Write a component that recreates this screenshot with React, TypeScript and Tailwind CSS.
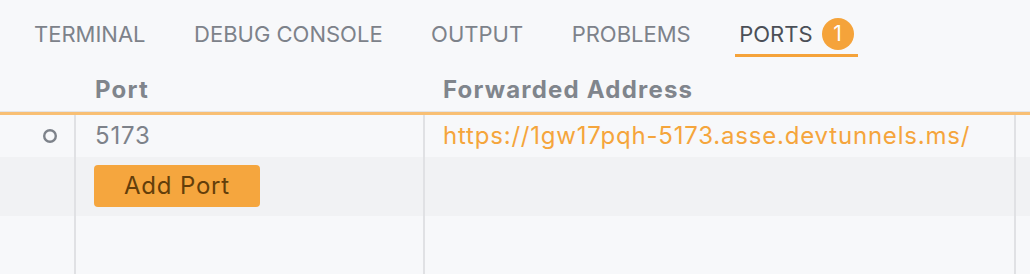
import React from 'react';

const tabs = ['TERMINAL', 'DEBUG CONSOLE', 'OUTPUT', 'PROBLEMS'];

function Circle() {
  return (
    <svg width="16" height="16" viewBox="0 0 16 16" fill="none">
      <circle cx="8" cy="8" r="5.8" stroke="#7d828a" strokeWidth="2.4" />
    </svg>
  );
}

export default function App() {
  return (
    <div
      className="h-[274px] w-[1030px] overflow-hidden bg-[#f7f8fa] flex flex-col"
      style={{ fontFamily: 'Inter, "Noto Sans", sans-serif' }}
    >
      {/* Tabs */}
      <div className="h-[57px] flex items-stretch gap-[40.5px] pl-[30px] text-[22px] leading-[22px]">
        {tabs.map((t) => (
          <div
            key={t}
            className="px-1 pt-[14px] flex items-center text-[#7d828a] border-b-[3px] border-transparent"
          >
            {t}
          </div>
        ))}
        <div className="px-1 pt-[14px] flex items-center text-[#4b4f57] border-b-[3px] border-[#f5a33a]">
          PORTS
          <span className="ml-[9px] w-[32px] h-[32px] rounded-full bg-[#f5a33a] text-white flex items-center justify-center text-[21px]">
            1
          </span>
        </div>
      </div>

      {/* Header */}
      <div className="h-[55px] flex items-start pt-[21px] text-[24px] leading-[24px] tracking-[1.2px] font-bold text-[#80858c] border-b border-[#e3e4e7]">
        <div className="w-[95px]" />
        <div className="w-[348px]">Port</div>
        <div>Forwarded Address</div>
      </div>
      <div className="h-[3px] bg-[#f8bf74]" />

      {/* Rows */}
      <div className="h-[42px] flex text-[24px] leading-[24px] tracking-[0.8px]">
        <div className="w-[74px] flex items-center justify-end pr-[16px]">
          <Circle />
        </div>
        <div className="w-[349px] border-l-2 border-[#e0e1e4] pl-[19px] flex items-center text-[#7d828a]">
          5173
        </div>
        <div className="w-[591px] border-l-2 border-[#e0e1e4] pl-[18px] flex items-center text-[#f5a53c]">
          https://1gw17pqh-5173.asse.devtunnels.ms/
        </div>
        <div className="flex-1 border-l-2 border-[#e0e1e4]" />
      </div>
      <div className="h-[59px] flex bg-[#f1f2f4]">
        <div className="w-[74px]" />
        <div className="w-[349px] border-l-2 border-[#e0e1e4] pl-[18px] pt-[8px]">
          <button className="w-[166px] h-[42px] rounded-[4px] bg-[#f5a63e] text-[#633e0a] text-[24px] leading-[24px] tracking-[0.8px] flex items-center justify-center">
            Add Port
          </button>
        </div>
        <div className="w-[591px] border-l-2 border-[#e0e1e4]" />
        <div className="flex-1 border-l-2 border-[#e0e1e4]" />
      </div>
      <div className="flex-1 flex">
        <div className="w-[74px]" />
        <div className="w-[349px] border-l-2 border-[#e0e1e4]" />
        <div className="w-[591px] border-l-2 border-[#e0e1e4]" />
        <div className="flex-1 border-l-2 border-[#e0e1e4]" />
      </div>
    </div>
  );
}
